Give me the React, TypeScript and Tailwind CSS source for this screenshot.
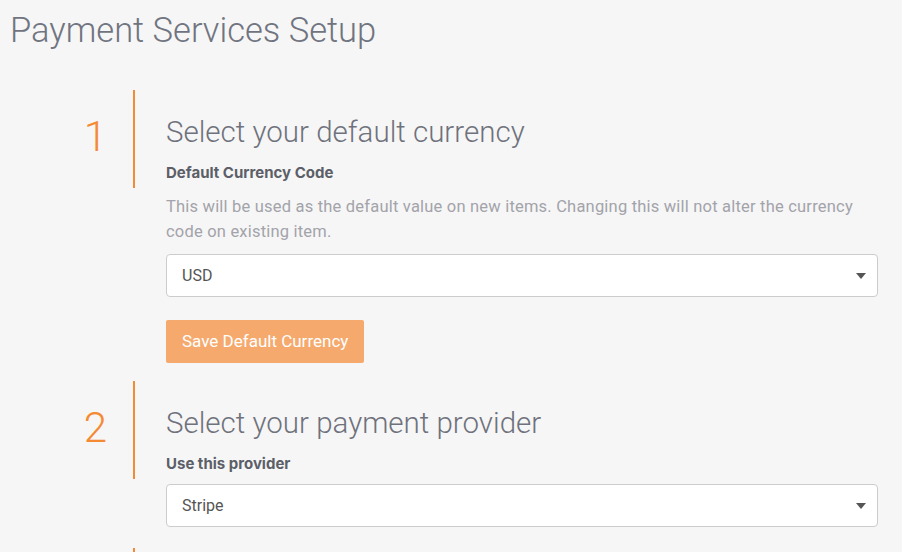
import { useState } from "react";

// Step ka header: number + orange line wala block
function StepHeader({ num, title, label }: { num: string; title: string; label: string }) {
  return (
    <div className="flex">
      <div className="w-[133px] shrink-0 pr-[26px] pt-[26px] text-right text-[42px] font-light leading-[42px] text-[#f58a35]">
        {num}
      </div>
      <div className="border-l-2 border-[#f58a35] pl-[31px] pt-[24px] pb-[5px]">
        <h2 className="text-[29.5px] font-light leading-[36px] text-[#6f727c]">{title}</h2>
        <div className="mt-[13px] font-['Inter'] text-[15px] font-bold leading-[20px] text-[#5c5f68]">
          {label}
        </div>
      </div>
    </div>
  );
}

function Select({ value, options, onChange }: { value: string; options: string[]; onChange: (v: string) => void }) {
  return (
    <div className="relative">
      <select
        value={value}
        onChange={(e) => onChange(e.target.value)}
        className="h-[43px] w-full appearance-none rounded-[4px] border border-[#cccccc] bg-white pl-[15px] pr-10 text-[16px] text-[#555555] outline-none"
      >
        {options.map((o) => (
          <option key={o}>{o}</option>
        ))}
      </select>
      {/* chhota triangle arrow */}
      <span className="pointer-events-none absolute right-[12px] top-[19px] h-0 w-0 border-x-[5px] border-t-[6px] border-x-transparent border-t-[#555555]" />
    </div>
  );
}

export default function App() {
  const [currency, setCurrency] = useState("USD");
  const [provider, setProvider] = useState("Stripe");

  return (
    <div className="h-[552px] overflow-hidden bg-[#f6f6f6] font-['Roboto',sans-serif]">
      <h1 className="pl-[10px] pt-[8px] text-[34.5px] font-light leading-[44px] text-[#707480]">
        Payment Services Setup
      </h1>

      <div className="mt-[38px] pr-[24px]">
        {/* Step 1 */}
        <StepHeader num="1" title="Select your default currency" label="Default Currency Code" />
        <div className="ml-[166px] pb-[18px]">
          <p className="mt-[6px] text-[16.5px] leading-[25px] tracking-[0.2px] text-[#a3a3aa]">
            This will be used as the default value on new items. Changing this will not alter the currency
            code on existing item.
          </p>
          <div className="mt-[10px]">
            <Select value={currency} options={["USD", "EUR", "GBP"]} onChange={setCurrency} />
          </div>
          <button className="mt-[23px] h-[43px] rounded-[2px] bg-[#f6a96c] px-[16px] text-[17px] text-white">
            Save Default Currency
          </button>
        </div>

        {/* Step 2 */}
        <StepHeader num="2" title="Select your payment provider" label="Use this provider" />
        <div className="ml-[166px] mt-[5px] pb-[21px]">
          <Select value={provider} options={["Stripe", "PayPal"]} onChange={setProvider} />
        </div>

        {/* Step 3 - sirf line dikhti hai, baaki frame ke bahar */}
        <div className="ml-[133px] h-[100px] border-l-2 border-[#f58a35]" />
      </div>
    </div>
  );
}
